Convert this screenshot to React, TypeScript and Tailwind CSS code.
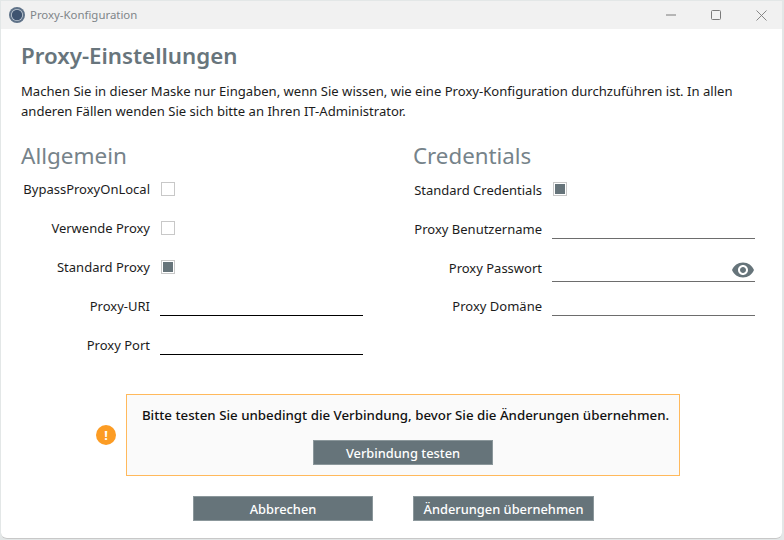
const FONT = "font-['Noto_Sans','Open_Sans',sans-serif]";

function Check({ on }: { on?: boolean }) {
  return (
    <span className="flex h-[14px] w-[14px] items-center justify-center border border-[#c8c8c8] bg-white">
      {on && <span className="h-[10px] w-[10px] bg-[#66747a]" />}
    </span>
  );
}

function Row({ label, low, children }: { label: string; low?: boolean; children: React.ReactNode }) {
  return (
    <div className="flex h-[39px]">
      <div className={`w-[129px] shrink-0 whitespace-nowrap text-right text-[13px] leading-[20px] text-[#1c1c1c] ${low ? "pt-[10px]" : "pt-[9px]"}`}>{label}</div>
      <div className="ml-[10px] w-[203px]">{children}</div>
    </div>
  );
}

function Line({ dark, h, children }: { dark?: boolean; h: string; children?: React.ReactNode }) {
  return <div className={`relative border-b ${dark ? "border-black" : "border-[#6d6d6d]"} ${h}`}>{children}</div>;
}

function Btn({ className, children }: { className: string; children: string }) {
  return (
    <button className={`${className} h-[25px] whitespace-nowrap border border-[#8b979b] bg-[#66747a] text-[12.85px] font-medium leading-[22px] text-white`}>
      {children}
    </button>
  );
}

export default function App() {
  return (
    <div className={`${FONT} h-[540px] w-[784px] overflow-hidden bg-[#e3e7e7] pl-[1px] pr-[2px] pt-[1px]`}>
      <div className="flex h-[538px] flex-col overflow-hidden rounded-b-[6px] border-b border-[#c8c8c8] bg-white">
        <div className="flex h-[28px] shrink-0 items-center bg-[#f1f1f1] pl-[8px]">
          <svg width="16" height="16" viewBox="0 0 16 16">
            <circle cx="8" cy="8" r="8" fill="#5f7288" />
            <circle cx="8" cy="8" r="6" fill="#c5ced8" />
            <circle cx="8" cy="8" r="5.2" fill="#3f5470" />
          </svg>
          <span className="ml-[5px] text-[11.4px] text-[#7f8589]">Proxy-Konfiguration</span>
          <div className="ml-auto flex items-center text-[#7a7a7a]">
            <svg width="10" height="10" viewBox="0 0 10 10" className="mr-[35px]">
              <path d="M0 5h10" stroke="currentColor" strokeWidth="1" />
            </svg>
            <svg width="10" height="10" viewBox="0 0 10 10" className="mr-[35px]">
              <rect x="0.5" y="0.5" width="9" height="9" rx="1" fill="none" stroke="currentColor" />
            </svg>
            <svg width="11" height="11" viewBox="0 0 11 11" className="mr-[15px]">
              <path d="M0.5 0.5l10 10M10.5 0.5l-10 10" stroke="currentColor" strokeWidth="0.9" />
            </svg>
          </div>
        </div>

        <div className="flex-1 px-[20px]">
          <h1 className="mt-[8px] text-[22.3px] font-semibold leading-[38px] text-[#68757c]">Proxy-Einstellungen</h1>
          <p className="mt-[6px] w-[740px] text-[13.09px] leading-[20px] text-[#1c1c1c]">
            Machen Sie in dieser Maske nur Eingaben, wenn Sie wissen, wie eine Proxy-Konfiguration durchzuführen ist. In allen anderen Fällen wenden Sie sich bitte an Ihren IT-Administrator.
          </p>

          <div className="mt-[21px] flex">
            <div className="w-[392px]">
              <h2 className="text-[22.5px] leading-[28px] text-[#76838a]">Allgemein</h2>
              <div>
                <Row label="BypassProxyOnLocal"><div className="pl-[1px] pt-[12px]"><Check /></div></Row>
                <Row label="Verwende Proxy"><div className="pl-[1px] pt-[12px]"><Check /></div></Row>
                <Row label="Standard Proxy"><div className="pl-[1px] pt-[12px]"><Check on /></div></Row>
                <Row label="Proxy-URI"><Line dark h="h-[29px]" /></Row>
                <Row label="Proxy Port"><Line dark h="h-[29px]" /></Row>
              </div>
            </div>
            <div>
              <h2 className="text-[22.3px] leading-[28px] text-[#76838a]">Credentials</h2>
              <div>
                <Row label="Standard Credentials" low><div className="pl-[1px] pt-[12px]"><Check on /></div></Row>
                <Row label="Proxy Benutzername" low><Line h="h-[30px]" /></Row>
                <Row label="Proxy Passwort" low>
                  <Line h="h-[34px]">
                    <svg width="24" height="24" viewBox="0 0 24 24" className="absolute bottom-[-1px] right-0 text-[#66747a]">
                      <path fill="currentColor" d="M12 4.5C7 4.5 2.73 7.61 1 12c1.73 4.39 6 7.5 11 7.5s9.27-3.11 11-7.5c-1.73-4.39-6-7.5-11-7.5zM12 17c-2.76 0-5-2.24-5-5s2.24-5 5-5 5 2.24 5 5-2.24 5-5 5zm0-8c-1.66 0-3 1.34-3 3s1.34 3 3 3 3-1.34 3-3-1.34-3-3-3z" />
                    </svg>
                  </Line>
                </Row>
                <Row label="Proxy Domäne"><Line h="h-[29px]" /></Row>
              </div>
            </div>
          </div>

          <div className="mt-[29px] flex items-center">
            <div className="ml-[75px] flex h-[20px] w-[20px] items-center justify-center rounded-full bg-[#fc9c24] text-[13px] font-bold leading-none text-white">!</div>
            <div className="ml-[10px] flex h-[82px] w-[554px] flex-col items-center border border-[#ffb95c] bg-[#fafafa] pt-[10px]">
              <div className="pl-[5px] text-[13.3px] font-medium leading-[20px] text-[#111]">
                Bitte testen Sie unbedingt die Verbindung, bevor Sie die Änderungen übernehmen.
              </div>
              <Btn className="mt-[15px] w-[180px]">Verbindung testen</Btn>
            </div>
          </div>

          <div className="mt-[20px] flex pl-[172px]">
            <Btn className="w-[180px]">Abbrechen</Btn>
            <Btn className="ml-[40px] w-[181px]">Änderungen übernehmen</Btn>
          </div>
        </div>
      </div>
    </div>
  );
}
